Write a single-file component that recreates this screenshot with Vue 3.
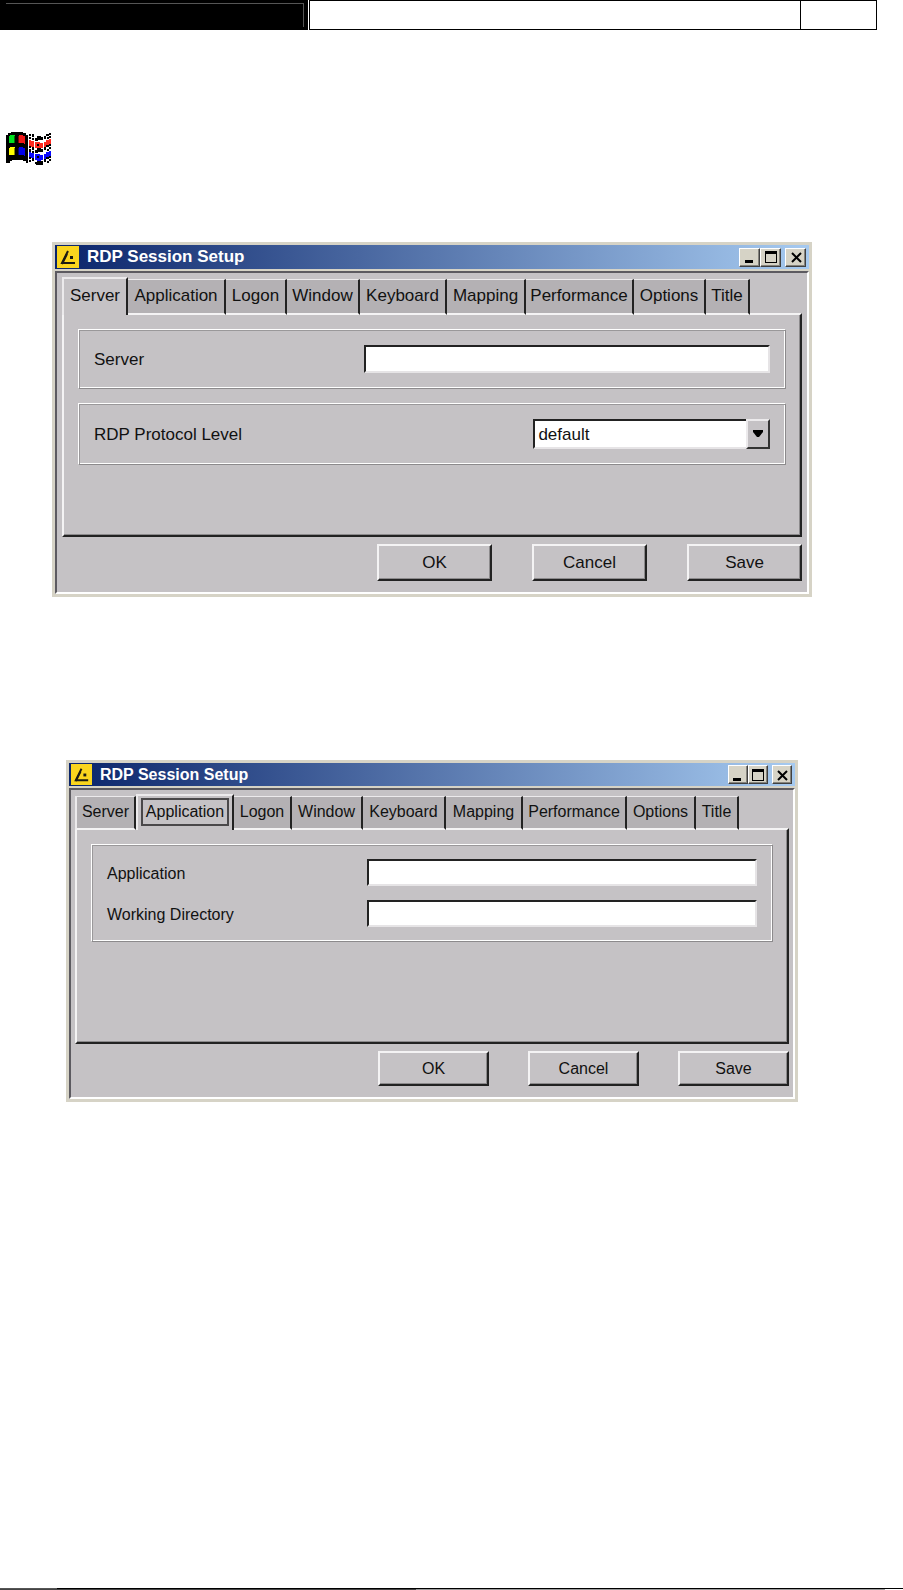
<script setup>
import { ref } from 'vue';

const tabs = ['Server', 'Application', 'Logon', 'Window', 'Keyboard', 'Mapping', 'Performance', 'Options', 'Title'];

const panels = {
  Server: [
    [{ id: 'server', label: 'Server', type: 'text' }],
    [{ id: 'protocol', label: 'RDP Protocol Level', type: 'select', options: ['default'] }],
  ],
  Application: [
    [
      { id: 'application', label: 'Application', type: 'text' },
      { id: 'directory', label: 'Working Directory', type: 'text' },
    ],
  ],
};

const dialogs = ref([
  {
    id: 'first',
    size: 'large',
    active: 'Server',
    focused: false,
    tabWidths: [66, 98, 61, 73, 87, 79, 108, 72, 44],
  },
  {
    id: 'second',
    size: 'small',
    active: 'Application',
    focused: true,
    tabWidths: [61, 98, 58, 71, 83, 77, 104, 69, 43],
  },
]);

const actions = ['OK', 'Cancel', 'Save'];

const selectTab = (dialog, tab) => {
  dialog.active = tab;
};

const getTabColumns = (dialog) => {
  return {
    gridTemplateColumns: dialog.tabWidths.map((width) => `${width}px`).join(' '),
  };
};
</script>

<template>
  <div class="page">
    <header class="page-header">
      <div class="header-black"><div class="header-line"></div></div>
      <div class="header-title"></div>
      <div class="header-number"></div>
    </header>

    <svg class="flag" viewBox="0 0 45 34" shape-rendering="crispEdges" aria-hidden="true">
      <path fill="#000" d="M5 0H17V1H20V3H22V31H20V29H17V28H6V29H4V31H0V3H2V1H5Z" />
      <path fill="#00e020" d="M4 3H9V11H3V4H4Z" />
      <path fill="#f01818" d="M13 3H17V4H19V12H18V11H13Z" />
      <path fill="#ff0" d="M4 15H9V23H3V16H4Z" />
      <path fill="#0000e8" d="M13 15H17V16H19V24H18V23H13Z" />
      <path fill="#007000" d="M8 4H9V11H8Z" />
      <path fill="#700" d="M12 4H13V11H12Z" />
      <path fill="#880" d="M8 16H9V23H8Z" />
      <path fill="#006" d="M12 16H13V23H12Z" />

      <!-- trailing ribbons -->
      <path fill="#ff2a20" d="M23 8H25V9H28V16H26V15H23ZM29 10H34V11H37V16H35V17H31V16H29ZM38 10H40V8H43V7H45V12H43V14H40V15H38Z" />
      <path fill="#0a0aff" d="M23 20H25V21H28V27H26V26H23ZM29 22H34V23H37V28H35V29H31V28H29ZM38 22H40V20H43V19H45V24H43V26H40V27H38Z" />
      <path
        fill="#000"
        d="M23 2H25V4H23ZM26 2H28V5H26ZM23 5H25V7H23ZM26 6H28V8H26ZM23 14H25V16H23ZM26 15H28V18H26ZM23 17H25V20H23ZM26 19H28V21H26ZM23 25H25V27H23ZM26 26H28V29H26ZM23 28H25V30H23Z"
      />
      <path
        fill="#000"
        d="M29 6H31V4H35V5H37V8H32V9H29ZM29 18H31V16H35V17H37V20H32V21H29ZM29 30H31V29H37V33H30V32H29ZM31 12H33V14H31ZM31 24H33V26H31Z"
      />
      <path
        fill="#000"
        d="M38 4H40V7H38ZM40 2H43V4H40ZM43 1H45V3H43ZM41 5H43V7H41ZM43 4H45V6H43ZM38 15H40V18H38ZM40 13H43V15H40ZM43 12H45V14H43ZM41 17H43V19H41ZM43 15H45V17H43ZM38 27H40V30H38ZM40 25H43V27H40ZM43 24H45V26H43ZM41 29H43V31H41ZM43 27H45V29H43Z"
      />
    </svg>

    <main class="dialogs">
      <section v-for="dialog in dialogs" :key="dialog.id" class="dialog" :class="dialog.size">
        <div class="title-bar">
          <svg class="app-icon" viewBox="0 0 22 22" aria-hidden="true">
            <rect width="22" height="22" fill="#fad51e" />
            <path d="M11 5L5 17H18" fill="none" stroke="#1c1b12" stroke-width="2" />
            <path d="M5 18L10 8" fill="none" stroke="#1c1b12" stroke-width="2" />
            <rect x="13" y="10" width="3" height="3" fill="#1c1b12" />
          </svg>
          <h2>RDP Session Setup</h2>
          <div class="caption-buttons">
            <button type="button" aria-label="Minimize">
              <svg viewBox="0 0 16 14"><path d="M3 10H11V13H3Z" /></svg>
            </button>
            <button type="button" aria-label="Maximize">
              <svg viewBox="0 0 16 14"><path fill-rule="evenodd" d="M2 1H14V13H2ZM3 4V12H13V4Z" /></svg>
            </button>
            <button type="button" aria-label="Close" class="close">
              <svg viewBox="0 0 16 14">
                <path d="M4 3L13 12M13 3L4 12" fill="none" stroke="#000" stroke-width="2" />
              </svg>
            </button>
          </div>
        </div>

        <div class="client">
          <div class="tabs" role="tablist" :style="getTabColumns(dialog)">
            <button
              v-for="tab in tabs"
              :key="tab"
              type="button"
              role="tab"
              class="tab"
              :class="{ active: dialog.active === tab, focused: dialog.focused && dialog.active === tab }"
              :aria-selected="dialog.active === tab"
              @click="selectTab(dialog, tab)"
            >
              <span>{{ tab }}</span>
            </button>
          </div>

          <div class="panel" role="tabpanel">
            <div v-for="(group, index) in panels[dialog.active]" :key="index" class="group">
              <div v-for="field in group" :key="field.id" class="field">
                <label :for="`${dialog.id}-${field.id}`">{{ field.label }}</label>
                <div v-if="field.type === 'select'" class="combo">
                  <select :id="`${dialog.id}-${field.id}`">
                    <option v-for="option in field.options" :key="option">{{ option }}</option>
                  </select>
                  <span class="combo-arrow" aria-hidden="true">
                    <svg viewBox="0 0 10 8"><path d="M0 0H10V2L6 7H4L0 2Z" /></svg>
                  </span>
                </div>
                <input v-else :id="`${dialog.id}-${field.id}`" type="text" />
              </div>
            </div>
          </div>

          <div class="actions">
            <button v-for="action in actions" :key="action" type="button">{{ action }}</button>
          </div>
        </div>
      </section>
    </main>

    <footer class="page-footer"></footer>
  </div>
</template>

<style>
body {
  margin: 0;
  background: #fff;
}
</style>

<style scoped>
.page {
  display: flex;
  flex-direction: column;
  min-height: 100vh;
  font-family: "Liberation Sans", Arial, sans-serif;
  color: #111;
}

.page * {
  box-sizing: border-box;
}

/* Running header */
.page-header {
  display: flex;
  height: 30px;
  margin-right: 26px;
}

.header-black {
  width: 308px;
  flex: none;
  margin-right: 1px;
  padding: 3px 4px 3px 6px;
  background: #000;
}

.header-line {
  height: 100%;
  border-top: 1px solid #555;
  border-right: 1px solid #555;
}

.header-title {
  flex: 1;
  border: 1px solid #000;
}

.header-number {
  width: 76px;
  border: 1px solid #000;
  border-left: none;
}

.flag {
  width: 45px;
  height: 34px;
  margin: 102px 0 76px 6px;
}

/* Dialog windows */
.dialogs {
  display: flex;
  flex-direction: column;
  gap: 163px;
}

.dialog {
  border: 2px solid #d6d3c6;
  padding: 1px;
  background: #d6d3c6;
}

.large {
  --text: 17px;
  --title: 24px;
  --icon: 22px;
  --caption: 21px;
  --tab: 38px;
  --tab-text: 26px;
  --side: 5px;
  --panel: 224px;
  --group: 15px;
  --field-gap: 14px;
  --input: 28px;
  --action: 115px;
  --action-height: 37px;
  --action-gap: 40px;
  margin: 0 91px 0 52px;
}

.small {
  --text: 16px;
  --title: 23px;
  --icon: 21px;
  --caption: 20px;
  --tab: 36px;
  --tab-text: 24px;
  --side: 4px;
  --panel: 216px;
  --group: 14px;
  --field-gap: 14px;
  --input: 27px;
  --action: 111px;
  --action-height: 35px;
  --action-gap: 39px;
  margin: 0 105px 0 66px;
}

.title-bar {
  display: flex;
  align-items: center;
  height: var(--title);
  padding: 0 3px 0 2px;
  background: linear-gradient(90deg, #0a246a, #a6caf0);
}

.app-icon {
  width: var(--icon);
  height: var(--icon);
}

h2 {
  flex: 1;
  margin: 0 0 0 8px;
  font-size: var(--text);
  line-height: 20px;
  color: #fff;
}

.caption-buttons {
  display: flex;
}

.caption-buttons button {
  width: var(--caption);
  height: 19px;
  padding: 0;
  border: 1px solid;
  border-color: #fff #404040 #404040 #fff;
  box-shadow: inset -1px -1px 0 #85837c;
  background: #d6d3c6;
}

.caption-buttons .close {
  margin-left: 4px;
}

.caption-buttons svg {
  display: block;
  width: 16px;
  height: 14px;
  margin: 0 auto;
}

.client {
  margin-top: 2px;
  padding: 4px var(--side) 11px;
  border: 2px solid;
  border-color: #5c5a60 #fff #fff #5c5a60;
  background: #c5c2c5;
  font-size: var(--text);
}

/* Tabs */
.tabs {
  display: grid;
  align-items: end;
  margin-bottom: -2px;
}

.tab {
  height: calc(var(--tab) - 2px);
  padding: 0 0 2px;
  border: 0 solid;
  border-width: 1px 2px 2px 0;
  border-color: #eceaec #222 #f4f3f4 #eceaec;
  background: #b4b1b4;
  color: inherit;
  font: inherit;
  white-space: nowrap;
}

.tab:first-child {
  border-left-width: 2px;
}

.tab.active {
  position: relative;
  height: var(--tab);
  border-width: 2px 2px 0 2px;
  background: #c5c2c5;
}

.tab span {
  display: block;
  line-height: var(--tab-text);
}

.tab.focused {
  padding: 0 3px 2px;
}

.tab.focused span {
  border: 2px solid #4a484a;
}

.panel {
  display: flex;
  flex-direction: column;
  gap: 14px;
  min-height: var(--panel);
  padding: 14px;
  border: 2px solid;
  border-color: #f4f3f4 #222 #222 #f4f3f4;
  box-shadow: inset -1px -1px 0 #8c8a8c;
}

.group {
  display: flex;
  flex-direction: column;
  gap: var(--field-gap);
  padding: var(--group) 15px;
  border: 1px solid;
  border-color: #fff #8c8a8c #8c8a8c #fff;
  box-shadow: inset 1px 1px 0 #9a989a, inset -1px -1px 0 #fff;
}

.field {
  display: flex;
  align-items: center;
  justify-content: space-between;
}

label {
  padding-top: 2px;
}

input {
  width: 60%;
  height: var(--input);
}

input,
select {
  padding: 0 4px;
  border: 2px solid;
  border-color: #222 #e6e4e6 #e6e4e6 #222;
  border-radius: 0;
  background: #fff;
  color: inherit;
  font: inherit;
}

.combo {
  position: relative;
  width: 35%;
  height: 30px;
}

select {
  width: 100%;
  height: 100%;
  padding: 0 26px 0 3px;
  appearance: none;
}

.combo-arrow {
  position: absolute;
  top: 0;
  right: 0;
  bottom: 0;
  display: flex;
  align-items: center;
  justify-content: center;
  width: 24px;
  border: 2px solid;
  border-color: #eceaec #333 #333 #eceaec;
  background: #c5c2c5;
  pointer-events: none;
}

.combo-arrow svg {
  width: 10px;
  height: 8px;
}

.actions {
  display: flex;
  justify-content: flex-end;
  gap: var(--action-gap);
  margin-top: 7px;
}

.actions button {
  width: var(--action);
  height: var(--action-height);
  padding: 0;
  border: 2px solid;
  border-color: #f4f3f4 #222 #222 #f4f3f4;
  box-shadow: inset -1px -1px 0 #8c8a8c;
  background: #c5c2c5;
  color: inherit;
  font: inherit;
}

/* Rule above the running footer */
.page-footer {
  height: 2px;
  margin-top: auto;
  background: linear-gradient(90deg, #555 57px, #000 57px) top / 100% 1px no-repeat,
    linear-gradient(90deg, #444 47%, #999 47%) left bottom / 98% 1px no-repeat;
}
</style>
